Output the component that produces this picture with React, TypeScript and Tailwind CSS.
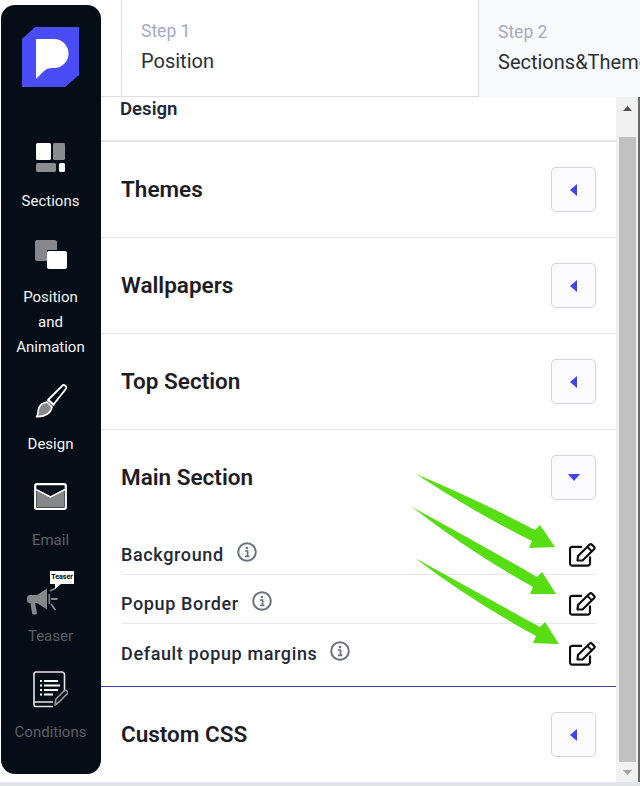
import { ReactNode } from 'react';

const font = "font-['Roboto',sans-serif]";

function Logo() {
  return (
    <svg width="57" height="60" viewBox="0 0 57 60" aria-hidden="true">
      <path d="M0 12 L13 0 H57 V48 L43 60 H0 Z" fill="#4a4cf5" />
      <path d="M14 12 H32 a14.5 14.5 0 0 1 0 29 H29 Q25 41 22 44 L14 52 Z" fill="#fff" />
    </svg>
  );
}

function SectionsIcon() {
  return (
    <svg width="29" height="29" viewBox="0 0 29 29" aria-hidden="true">
      <rect x="0" y="0" width="15" height="17" rx="1.5" fill="#fff" />
      <rect x="17" y="0" width="12" height="17" rx="1.5" fill="#8a8c90" />
      <rect x="0" y="20" width="20" height="9" rx="1.5" fill="#8a8c90" />
      <rect x="23" y="20" width="6" height="9" rx="1.5" fill="#fff" />
    </svg>
  );
}

function PositionIcon() {
  return (
    <svg width="32" height="29" viewBox="0 0 32 29" aria-hidden="true">
      <path d="M2 0 H20 a2 2 0 0 1 2 2 V10 H12 V21 H2 a2 2 0 0 1 -2 -2 V2 a2 2 0 0 1 2 -2 Z" fill="#85878b" />
      <rect x="12" y="11" width="20" height="18" rx="2" fill="#fff" />
    </svg>
  );
}

function BrushIcon() {
  return (
    <svg width="32" height="34" viewBox="0 0 32 34" fill="none" aria-hidden="true">
      <path d="M13 16 L27 2 a2.4 2.4 0 0 1 3.6 3.2 L18.5 20.5 Z" stroke="#fff" strokeWidth="1.8" strokeLinejoin="round" />
      <path d="M12 18 L17 23 C16 29 10 33 1.5 32.6 C4 30 2 27 4.5 22.6 C6 20 9 18.6 12 18 Z" fill="#85878b" stroke="#fff" strokeWidth="1.6" strokeLinejoin="round" />
      <path d="M13 15.5 L19 21.5" stroke="#fff" strokeWidth="1.8" />
    </svg>
  );
}

function MailIcon() {
  return (
    <svg width="33" height="27" viewBox="0 0 33 27" aria-hidden="true">
      <rect x="1.2" y="1.2" width="30.6" height="24.6" rx="1.5" fill="#06101a" stroke="#fff" strokeWidth="2.2" />
      <path d="M3 8 L16.5 15 L30 8 V24 H3 Z" fill="#85878b" />
      <path d="M2 6.5 L16.5 14 L31 6.5" fill="none" stroke="#fff" strokeWidth="1.6" />
    </svg>
  );
}

function TeaserIcon() {
  return (
    <svg className="mr-[16px]" width="31" height="27" viewBox="0 0 31 27" fill="#85878b" aria-hidden="true">
      <path d="M0 10 a3 3 0 0 1 3 -3 H10 L20 0.5 V21.5 L10 15 H8 L10 25 a1.5 1.5 0 0 1 -1.5 1.5 H6.5 a1.5 1.5 0 0 1 -1.5 -1.3 L3.5 15 H3 a3 3 0 0 1 -3 -3 Z" />
      <rect x="21.5" y="6" width="1.6" height="10" fill="#85878b" />
      <path d="M23 3 L29 0 M24 11 H30.5 M24 16 L28.5 22" stroke="#85878b" strokeWidth="1.8" />
    </svg>
  );
}

function ConditionsIcon() {
  return (
    <svg width="35" height="37" viewBox="0 0 35 37" fill="none" aria-hidden="true">
      <path d="M3 1 H29 a2.5 2.5 0 0 1 2.5 2.5 V22 M20 31 H1 V3 a2 2 0 0 1 2 -2" stroke="#e5e5e5" strokeWidth="1.6" />
      <path d="M1 31 V34 a1.5 1.5 0 0 0 1.5 1.5 H20" stroke="#e5e5e5" strokeWidth="1.6" />
      <path d="M7 10 H9 M7 14.5 H9 M7 19 H9 M7 23.5 H9" stroke="#fff" strokeWidth="2" />
      <path d="M11 10 H25 M11 14.5 H27 M11 19 H25 M11 23.5 H20" stroke="#fff" strokeWidth="2" />
      <path d="M22 34 L23 28 L31 20 a2 2 0 0 1 3 3 L26 31 Z" stroke="#9a9a9a" strokeWidth="1.6" strokeLinejoin="round" fill="#06101a" />
    </svg>
  );
}

function NavItem({
  icon,
  labels,
  dim,
  slot,
  pad,
  children,
}: {
  icon: ReactNode;
  labels: string[];
  dim?: boolean;
  slot: string;
  pad: string;
  children?: ReactNode;
}) {
  return (
    <div className="flex flex-col items-center">
      <div className={`relative flex items-end justify-center ${slot} ${pad}`}>
        {icon}
        {children}
      </div>
      {labels.map((label) => (
        <span
          key={label}
          className={`text-[15px] leading-[25px] ${dim ? 'text-[#5c6066]' : 'text-[#f4f5f6]'}`}
        >
          {label}
        </span>
      ))}
    </div>
  );
}

function Sidebar() {
  return (
    <aside className="mt-[5px] ml-px flex h-[769px] w-[100px] shrink-0 flex-col items-center rounded-[14px] bg-[#050d16] pt-[22px] pr-px">
      <div className="h-[90px]">
        <Logo />
      </div>
      <NavItem icon={<SectionsIcon />} labels={['Sections']} slot="h-[72px]" pad="pb-[17px]" />
      <NavItem icon={<PositionIcon />} labels={['Position', 'and', 'Animation']} slot="h-[71px]" pad="pb-[16px]" />
      <NavItem icon={<BrushIcon />} labels={['Design']} slot="h-[72px]" pad="pb-[14px]" />
      <NavItem icon={<MailIcon />} labels={['Email']} dim slot="h-[71px]" pad="pb-[18px]" />
      <NavItem icon={<TeaserIcon />} labels={['Teaser']} dim slot="h-[71px]" pad="pb-[9px]">
        <span className="absolute top-[18px] left-[23px] w-[24px] bg-white text-center text-[7px] leading-[13px] font-bold text-black">
          Teaser
          <span className="absolute top-[13px] left-[5px] h-0 w-0 border-t-[5px] border-r-[6px] border-t-white border-r-transparent" />
        </span>
      </NavItem>
      <NavItem icon={<ConditionsIcon />} labels={['Conditions']} dim slot="h-[71px]" pad="pb-[12px]" />
    </aside>
  );
}

function Steps() {
  return (
    <div className="flex h-[97px] shrink-0">
      <div className="w-[20px] border-b border-[#dcdee2]" />
      <div className="flex w-[358px] flex-col justify-center border-x border-b border-[#dcdee2] bg-white pb-[4px] pl-[19px]">
        <span className="text-[17.5px] leading-[30px] text-[#a3abc2]">Step 1</span>
        <span className="text-[20px] leading-[30px] text-[#2a2f3a]">Position</span>
      </div>
      <div className="flex flex-1 flex-col justify-center overflow-hidden bg-[#f8fafc] pb-[4px] pl-[19px] whitespace-nowrap">
        <span className="text-[17.5px] leading-[30px] text-[#a3abc2]">Step 2</span>
        <span className="text-[20px] leading-[30px] text-[#2a2f3a]">Sections&amp;Themes</span>
      </div>
    </div>
  );
}

function ToggleButton({ open }: { open?: boolean }) {
  return (
    <button className="flex h-[45px] w-[45px] items-center justify-center rounded-[5px] border border-[#d5d6da] bg-[#fbfbfe]">
      {open ? (
        <svg width="12" height="7" viewBox="0 0 12 7" aria-hidden="true">
          <path d="M0 0 H12 L6 7 Z" fill="#4343ee" />
        </svg>
      ) : (
        <svg width="7" height="12" viewBox="0 0 7 12" aria-hidden="true">
          <path d="M7 0 V12 L0 6 Z" fill="#4343ee" />
        </svg>
      )}
    </button>
  );
}

function SectionRow({ title, open, border = true }: { title: string; open?: boolean; border?: boolean }) {
  return (
    <div className={`flex h-[96px] items-center justify-between pr-[20px] pl-[20px] ${border ? 'border-b border-[#e3e4e7]' : 'pb-px'}`}>
      <h3 className="text-[22.5px] font-semibold text-[#1d1c25]">{title}</h3>
      <ToggleButton open={open} />
    </div>
  );
}

function InfoIcon() {
  return (
    <svg width="20" height="20" viewBox="0 0 20 20" fill="none" aria-hidden="true">
      <circle cx="10" cy="10" r="8.8" stroke="#6b7280" strokeWidth="2" />
      <circle cx="10" cy="6" r="1.3" fill="#6b7280" />
      <path d="M8 9 H10.6 V14 M8 14.4 H12.4" stroke="#6b7280" strokeWidth="1.7" />
    </svg>
  );
}

function EditIcon() {
  return (
    <svg width="27" height="24" viewBox="0 0 27 24" fill="none" aria-hidden="true">
      <path d="M21 13.5 V20.5 a2.2 2.2 0 0 1 -2.2 2.2 H3.2 a2.2 2.2 0 0 1 -2.2 -2.2 V6 a2.2 2.2 0 0 1 2.2 -2.2 H13" stroke="#0c0c0e" strokeWidth="2.2" />
      <path d="M8.5 17.5 L9 13 L20.5 1.8 a1.8 1.8 0 0 1 2.5 0 L25 3.8 a1.8 1.8 0 0 1 0 2.5 L13.5 17.5 Z" stroke="#0c0c0e" strokeWidth="2.2" strokeLinejoin="round" />
      <path d="M18.5 4 L23 8.5" stroke="#0c0c0e" strokeWidth="2" />
    </svg>
  );
}

function SubRow({ label, height, border = true }: { label: string; height: string; border?: boolean }) {
  return (
    <div className={`flex items-start justify-between ${height} ${border ? 'border-b border-[#e5e6e9]' : ''}`}>
      <div className="flex h-[22px] items-center gap-[13px]">
        <span className="mt-px text-[18px] leading-[22px] font-medium tracking-[0.63px] text-[#1f2937]">{label}</span>
        <span className="-mt-[4px]">
          <InfoIcon />
        </span>
      </div>
      <EditIcon />
    </div>
  );
}

function Scrollbar() {
  return (
    <div className="flex h-[685px] w-[22px] shrink-0 flex-col items-center bg-[#f1f1f1]">
      <div className="flex h-[40px] w-full shrink-0 justify-center pt-[9px]">
        <svg width="9" height="5" viewBox="0 0 9 5" aria-hidden="true">
          <path d="M0 5 L4.5 0 L9 5 Z" fill="#505050" />
        </svg>
      </div>
      <div className="w-[17px] flex-1 bg-[#c1c1c1]" />
      <div className="flex h-[20px] w-full shrink-0 justify-center pt-[8px]">
        <svg width="9" height="5" viewBox="0 0 9 5" aria-hidden="true">
          <path d="M0 0 L9 0 L4.5 5 Z" fill="#a3a3a3" />
        </svg>
      </div>
    </div>
  );
}

function GreenArrows() {
  return (
    <svg className="pointer-events-none absolute inset-0" width="640" height="786" viewBox="0 0 640 786" aria-hidden="true">
      <path d="M416 474 Q480 501 535 530 L540 525 L555 547 L529 548 L532 541 Q470 510 416 474 Z" fill="#57de12" />
      <path d="M412 507 Q480 544 537 577 L542 572 L556 594 L530 594 L533 587 Q470 552 412 507 Z" fill="#57de12" />
      <path d="M415 558 Q480 594 540 627 L545 622 L559 644 L533 643 L536 636 Q470 600 415 558 Z" fill="#57de12" />
    </svg>
  );
}

export default function App() {
  return (
    <div className={`relative flex h-[786px] w-[640px] overflow-hidden bg-white ${font}`}>
      <Sidebar />
      <main className="flex min-w-0 flex-1 flex-col">
        <Steps />
        <div className="flex">
          <div className="w-[515px] shrink-0">
            <div className="flex h-[45px] items-start border-b-2 border-[#e3e4e7] pt-[1px] pl-[19px]">
              <span className="text-[18.6px] leading-[22px] font-semibold text-[#1f2937]">Design</span>
            </div>
            <SectionRow title="Themes" />
            <SectionRow title="Wallpapers" />
            <SectionRow title="Top Section" />
            <SectionRow title="Main Section" open border={false} />
            <div className="border-b border-[#3f3fb0] pr-[20px] pl-[20px]">
              <SubRow label="Background" height="h-[49px] pt-[17px]" />
              <SubRow label="Popup Border" height="h-[49px] pt-[17px]" />
              <SubRow label="Default popup margins" height="h-[62px] pt-[18px]" border={false} />
            </div>
            <SectionRow title="Custom CSS" border={false} />
          </div>
          <Scrollbar />
          <div className="h-[685px] flex-1 bg-[#666a6e]" />
        </div>
      </main>
      <div className="absolute right-0 bottom-0 left-0 h-[4px] bg-[#e3e4e7]" />
      <GreenArrows />
    </div>
  );
}
